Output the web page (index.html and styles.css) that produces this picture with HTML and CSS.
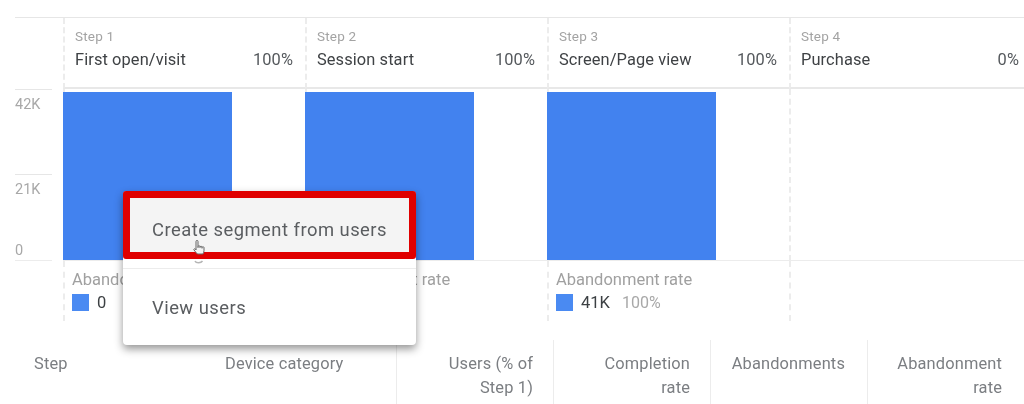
FILE: index.html
```html
<!DOCTYPE html>
<html lang="en">
<head>
<meta charset="utf-8">
<title>Funnel exploration</title>
<link rel="stylesheet" href="styles.css">
</head>
<body>
<main class="page">
  <section class="funnel">
    <div class="corner"></div>
    <header class="step-head"><span class="step-no">Step 1</span><div class="step-row"><span>First open/visit</span><span class="pct">100%</span></div></header>
    <header class="step-head"><span class="step-no">Step 2</span><div class="step-row"><span>Session start</span><span class="pct">100%</span></div></header>
    <header class="step-head"><span class="step-no">Step 3</span><div class="step-row"><span>Screen/Page view</span><span class="pct">100%</span></div></header>
    <header class="step-head"><span class="step-no">Step 4</span><div class="step-row"><span>Purchase</span><span class="pct">0%</span></div></header>

    <div class="axis">
      <div class="tick"><span>42K</span></div>
      <div class="tick tick-last"><span>21K</span><span>0</span></div>
    </div>
    <div class="plot"><div class="bar"></div></div>
    <div class="plot"><div class="bar"></div></div>
    <div class="plot"><div class="bar"></div></div>
    <div class="plot"></div>

    <div class="corner-foot"></div>
    <div class="foot"><span class="foot-label">Abandonment rate</span><div class="legend"><i class="swatch"></i><b class="val">0</b></div></div>
    <div class="foot"><span class="foot-label">Abandonment rate</span><div class="legend"><i class="swatch"></i><b class="val">0</b></div></div>
    <div class="foot"><span class="foot-label">Abandonment rate</span><div class="legend"><i class="swatch"></i><b class="val">41K</b><span class="share">100%</span></div></div>
    <div class="foot"></div>
  </section>

  <section class="table-head">
    <div class="th th-step">Step</div>
    <div class="th th-device">Device category</div>
    <div class="th th-num">Users (% of<br>Step 1)</div>
    <div class="th th-num">Completion<br>rate</div>
    <div class="th th-num th-wide">Abandonments</div>
    <div class="th th-num th-wide">Abandonment<br>rate</div>
  </section>

  <nav class="menu">
    <div class="menu-item menu-hot">Create segment from users</div>
    <div class="menu-item menu-plain">View users</div>
  </nav>

  <svg class="cursor" width="18" height="26" viewBox="0 0 18 26" aria-hidden="true">
    <path class="cursor-hand" d="M4 11V2.500C4 1 6 1 6 2.500V9m0-1.500c0-1 2-1 2 0V9m0-1c0-1 2-1 2 0V9.500m0-1c0-1 2-1 2 0v3c0 1.500-.5 2.500-1 3.500H5.500C4.500 14 3 12.500 2 11c-.7-1 .8-1.800 1.500-.8L4 11"/>
    <path class="cursor-halo" d="M3 22c1 2.300 6 2.300 7.500 0"/>
  </svg>
</main>
</body>
</html>
```
FILE: styles.css
```css
* { box-sizing: border-box; }
html, body { margin: 0; height: 100%; background: #fff; overflow: hidden; }
body { font-family: Roboto, "Liberation Sans", sans-serif; color: #3c4043; }
.page { position: relative; width: 1024px; height: 404px; overflow: hidden; padding-top: 17px; filter: blur(.35px); }

.funnel {
  display: grid;
  grid-template-columns: 48px repeat(4, 242px);
  grid-template-rows: 71px 172px 60px;
  margin-left: 15px;
  width: 1016px;
  border-top: 1px solid #e6e6e6;
}
.step-head {
  border-left: 2px dashed #ececec;
  border-bottom: 2px solid #e8e8e8;
  padding: 10px 12px 0 10px;
  display: flex;
  flex-direction: column;
}
.step-no { font-size: 13.500px; line-height: 16px; color: #a3a3a3; letter-spacing: .2px; }
.step-row { display: flex; justify-content: space-between; margin-top: 6px; font-size: 16.400px; line-height: 20px; color: #3f4245; letter-spacing: .1px; }
.pct { color: #55595d; }

.axis { display: flex; flex-direction: column; width: 37px; }
.tick { flex: 1; border-top: 1px solid #e6e6e6; font-size: 14.500px; line-height: 16px; color: #a8a8a8; padding-top: 7px; }
.tick-last { display: flex; flex-direction: column; justify-content: space-between; padding-bottom: 1px; border-bottom: 1px solid #ececec; }

.plot { border-left: 2px dashed #ececec; padding-top: 3px; border-bottom: 1px solid #ececec; }
.bar { width: 169px; height: 100%; background: #4282ef; margin-left: -2px; }

.foot { border-left: 2px dashed #ececec; padding: 9px 0 0 7px; }
.foot-label { display: block; font-size: 16.500px; line-height: 20px; color: #a0a0a0; white-space: nowrap; }
.legend { display: flex; align-items: center; margin-top: 3px; }
.swatch { width: 17px; height: 17px; background: #4a8af2; margin-right: 8px; }
.val { font-weight: 400; font-size: 16.500px; color: #3c4043; }
.share { font-size: 16px; color: #a8a8a8; margin-left: 12px; }

.table-head {
  display: grid;
  grid-template-columns: 205px 191px repeat(4, 157px);
  margin-top: 19px;
  height: 64px;
}
.th { font-size: 16.400px; line-height: 24px; color: #7b7e82; padding-top: 12px; letter-spacing: .15px; }
.th-step { padding-left: 34px; }
.th-device { padding-left: 20px; }
.th-num { border-left: 1px solid #ececec; text-align: right; padding-right: 20px; }
.th-wide { padding-right: 22px; }

.menu {
  position: absolute;
  left: 123px;
  top: 191px;
  width: 293px;
  height: 154px;
  background: #fff;
  border-radius: 4px;
  box-shadow: 0 4px 9px rgba(0, 0, 0, .42);
}
.menu-item { font-size: 18.400px; letter-spacing: .48px; color: #5a5d60; padding-left: 29px; display: flex; align-items: center; }
.menu-hot { height: 68px; padding: 9px 0 0 22px; background: #f4f4f4; border: 7px solid #e00000; border-radius: 3px; }
.menu-plain { height: 77px; margin-top: 9px; border-top: 1px solid #ececec; }

.cursor { position: absolute; left: 192px; top: 239px; }
.cursor-hand { fill: #f4f4f4; stroke: #666; stroke-width: 1; }
.cursor-halo { fill: none; stroke: #b5b5b5; stroke-width: 1.500; }
```
